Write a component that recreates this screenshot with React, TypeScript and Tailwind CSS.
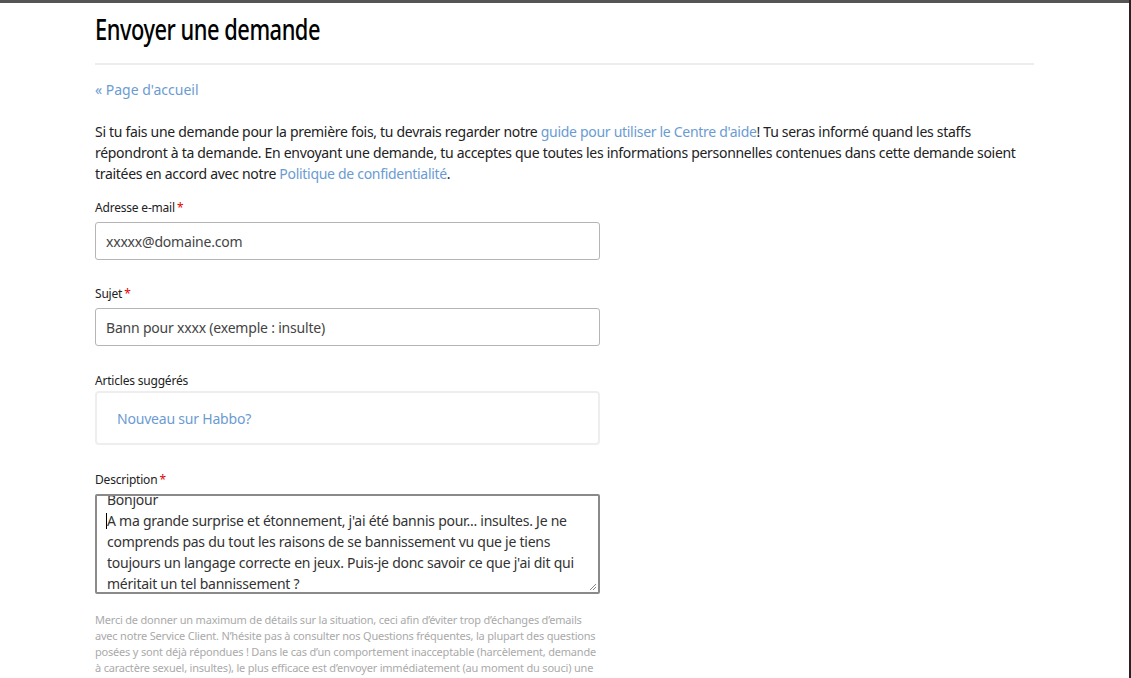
import React from "react";

const font = { fontFamily: '"Noto Sans", "Open Sans", sans-serif' };

function Req() {
  return <span className="text-[#e60000] ml-[2px]">*</span>;
}

export default function App() {
  return (
    <div className="w-[1131px] h-[678px] overflow-hidden bg-white relative text-[#222]" style={font}>
      <div className="h-[3px] bg-[#555]" />
      <div className="absolute right-0 top-0 w-[2px] h-full bg-[#2a2222]" />
      <div className="ml-[95px] w-[939px]">
        <h1 className="text-[28px] leading-[34px] mt-[9px] font-medium tracking-[-0.6px] text-black origin-left scale-x-[0.78] whitespace-nowrap">
          Envoyer une demande
        </h1>
        <div className="h-[2px] bg-[#ededed] mt-[17px]" />
        <a className="block mt-[15px] text-[14px] leading-[20px] text-[#6b9bd2]">« Page d'accueil</a>
        <p className="mt-[21px] text-[14px] leading-[21px] text-[#222] tracking-[-0.3px] whitespace-nowrap">
          Si tu fais une demande pour la première fois, tu devrais regarder notre{" "}
          <span className="text-[#6b9bd2]">guide pour utiliser le Centre d'aide</span>! Tu seras informé quand les staffs
          <br />
          répondront à ta demande. En envoyant une demande, tu acceptes que toutes les informations personnelles contenues dans cette demande soient
          <br />
          traitées en accord avec notre <span className="text-[#6b9bd2]">Politique de confidentialité</span>.
        </p>

        <div className="mt-[16px] text-[12px] leading-[16px] tracking-[-0.2px]">
          Adresse e-mail<Req />
        </div>
        <div className="mt-[6px] w-[505px] h-[38px] border border-[#b5b5b5] rounded-[3px] flex items-center px-[10px] text-[14px] text-[#444] tracking-[-0.2px] whitespace-nowrap">
          xxxxx@domaine.com
        </div>

        <div className="mt-[26px] text-[12px] leading-[16px] tracking-[-0.2px]">
          Sujet<Req />
        </div>
        <div className="mt-[6px] w-[505px] h-[38px] border border-[#b5b5b5] rounded-[3px] flex items-center px-[10px] text-[14px] text-[#444] tracking-[-0.2px] whitespace-nowrap">
          Bann pour xxxx (exemple : insulte)
        </div>

        <div className="mt-[27px] text-[12px] leading-[16px] tracking-[-0.2px]">Articles suggérés</div>
        <div className="mt-[2px] w-[505px] h-[54px] border-2 border-[#eeeeee] rounded-[4px] flex items-center px-[20px] text-[14px] text-[#6b9bd2] tracking-[-0.2px]">
          Nouveau sur Habbo?
        </div>

        <div className="mt-[27px] text-[12px] leading-[16px] tracking-[-0.2px]">
          Description<Req />
        </div>
        <div className="relative mt-[6px] w-[505px] h-[100px] border-2 border-[#8a8a8a] rounded-[2px] overflow-hidden">
          <div className="-mt-[7px] px-[10px] text-[14px] leading-[21px] text-[#333] tracking-[-0.25px] whitespace-nowrap">
            <div>Bonjour</div>
            <div className="relative">
              <span className="absolute left-[-1px] top-[3px] w-[1px] h-[16px] bg-black" />
              A ma grande surprise et étonnement, j'ai été bannis pour... insultes. Je ne
              <br />
              comprends pas du tout les raisons de se bannissement vu que je tiens
              <br />
              toujours un langage correcte en jeux. Puis-je donc savoir ce que j'ai dit qui
              <br />
              méritait un tel bannissement ?
            </div>
          </div>
          <svg className="absolute right-[1px] bottom-[1px]" width="8" height="8" viewBox="0 0 8 8">
            <path d="M7 1 L1 7 M7 4 L4 7" stroke="#888" strokeWidth="1" />
          </svg>
        </div>

        <p className="mt-[18px] w-[520px] text-[11px] leading-[16px] text-[#aaa] tracking-[-0.2px] whitespace-nowrap">
          Merci de donner un maximum de détails sur la situation, ceci afin d’éviter trop d’échanges d’emails
          <br />
          avec notre Service Client. N’hésite pas à consulter nos Questions fréquentes, la plupart des questions
          <br />
          posées y sont déjà répondues ! Dans le cas d’un comportement inacceptable (harcèlement, demande
          <br />
          à caractère sexuel, insultes), le plus efficace est d’envoyer immédiatement (au moment du souci) une
        </p>
      </div>
    </div>
  );
}
